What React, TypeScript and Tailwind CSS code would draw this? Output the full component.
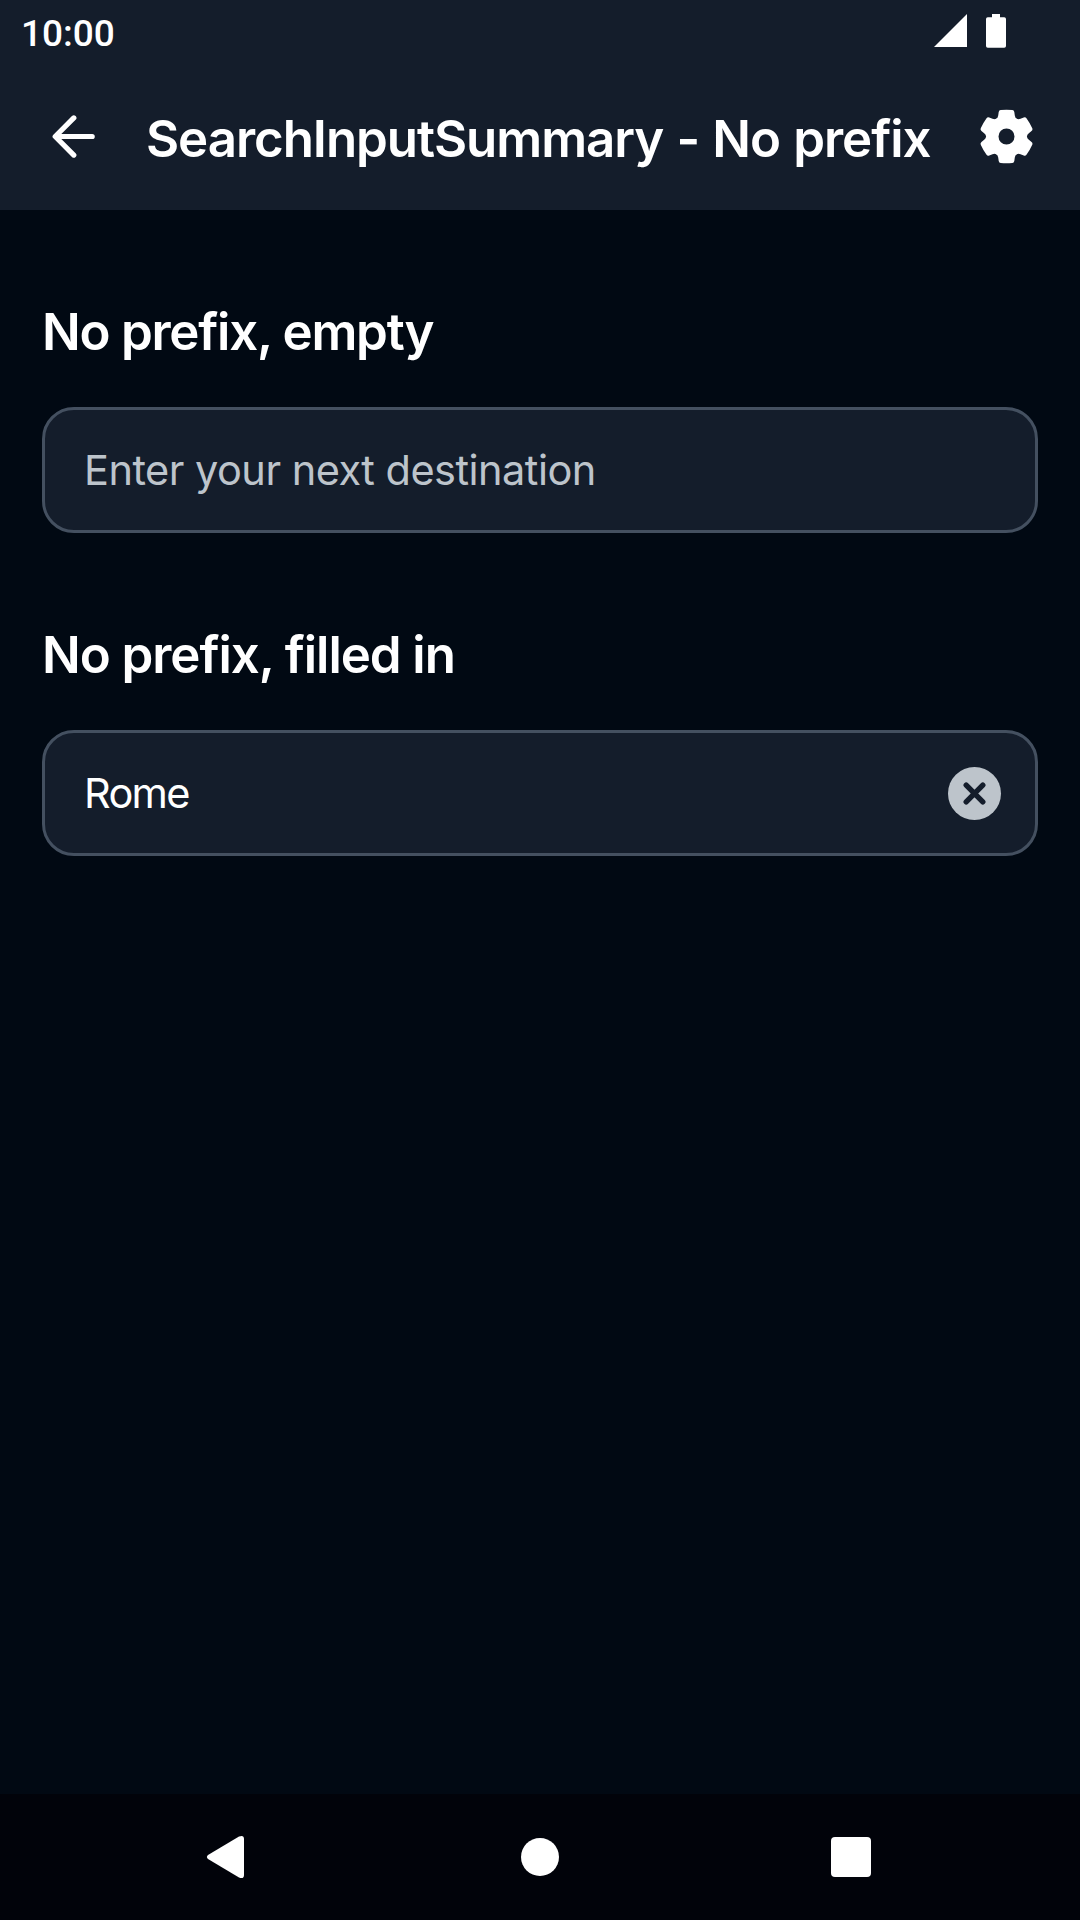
import React from "react";

const TEETH = [0, 60, 120, 180, 240, 300];

function StatusBar() {
  return (
    <div className="flex h-[63px] items-start justify-between pl-[21px] pr-[73px]">
      <span className="mt-[12px] font-[Roboto] text-[37px] leading-[44px] font-medium">10:00</span>
      <div className="mt-[14px] flex gap-[19px]">
        <svg width="33" height="34" viewBox="0 0 33 34" fill="white">
          <path d="M33 0V33H0Z" />
        </svg>
        <svg width="21" height="34" viewBox="0 0 21 34" fill="white">
          <path d="M6 0h8v3.2h4.2a1.8 1.8 0 0 1 1.8 1.8v27a1.8 1.8 0 0 1-1.8 1.8h-16.4a1.8 1.8 0 0 1-1.8-1.8v-27a1.8 1.8 0 0 1 1.8-1.8h4.2Z" />
        </svg>
      </div>
    </div>
  );
}

function BackIcon() {
  return (
    <svg width="44" height="44" viewBox="-22.5 -22.5 44 44" fill="none" stroke="white" strokeWidth="5.2" strokeLinecap="round" strokeLinejoin="round">
      <path d="M18.7 0H-18M0.3 -18.6L-18.3 0L0.3 18.6" />
    </svg>
  );
}

function SettingsIcon() {
  return (
    <svg width="56" height="56" viewBox="-28.5 -28.5 56 56" fill="white">
      <circle r="14.2" fill="none" stroke="white" strokeWidth="12.4" />
      {TEETH.map((angle) => (
        <path
          key={angle}
          transform={`rotate(${angle})`}
          d="M-8 -14L-10.2 -17.7Q-8.7 -18.6 -8.3 -21L-7.8 -24.4Q-7.5 -26.2 -5.8 -26.4Q0 -27 5.8 -26.4Q7.5 -26.2 7.8 -24.4L8.3 -21Q8.7 -18.6 10.2 -17.7L8 -14Z"
        />
      ))}
    </svg>
  );
}

function Field({ children }: { children: React.ReactNode }) {
  return (
    <div className="flex h-[126px] items-center justify-between rounded-[32px] border-[3px] border-[#445060] bg-[#141d2b] pt-px pr-[33px] pl-[39px] text-[41.5px] whitespace-nowrap">
      {children}
    </div>
  );
}

export default function App() {
  return (
    <div className="flex h-[1920px] w-[1080px] flex-col overflow-hidden bg-[#010913] font-[Inter,sans-serif] text-white">
      <header className="h-[210px] bg-[#141d2b]">
        <StatusBar />
        <div className="flex h-[147px] items-center pr-[46px] pb-px pl-[51px]">
          <BackIcon />
          <h1 className="mt-[5px] ml-[51px] flex-1 text-[51px] leading-[60px] font-semibold tracking-[-1.05px] whitespace-nowrap [word-spacing:1.4px]">
            SearchInputSummary - No prefix
          </h1>
          <SettingsIcon />
        </div>
      </header>
      <main className="flex-1 px-[42px]">
        <section className="pt-[92px]">
          <h2 className="h-[105px] text-[51px] leading-[60px] font-semibold tracking-[-1.25px]">No prefix, empty</h2>
          <Field>
            <span className="tracking-[-0.52px] text-[#bdc4cb]">Enter your next destination</span>
          </Field>
        </section>
        <section className="pt-[92px]">
          <h2 className="h-[105px] text-[51px] leading-[60px] font-semibold tracking-[-1.05px]">No prefix, filled in</h2>
          <Field>
            <span className="tracking-[-1.7px]">Rome</span>
            <svg width="54" height="54" viewBox="-26.5 -26.5 54 54">
              <circle r="26.5" fill="#bdc4cb" />
              <path d="M-8.3 -8.3L8.3 8.3M8.3 -8.3L-8.3 8.3" stroke="#141d2b" strokeWidth="5.4" strokeLinecap="round" />
            </svg>
          </Field>
        </section>
      </main>
      <nav className="flex h-[126px] items-center justify-between bg-[#01030a] pr-[209px] pl-[206px]">
        <svg width="40" height="44" viewBox="0 0 40 44" fill="white">
          <path d="M2 20Q-.2 22 2 24L33 42.5Q38 44.5 38 40V4Q38 -.5 33 1.5Z" />
        </svg>
        <div className="ml-[3px] size-[37.5px] rounded-full bg-white" />
        <div className="size-[40px] rounded-[4px] bg-white" />
      </nav>
    </div>
  );
}
